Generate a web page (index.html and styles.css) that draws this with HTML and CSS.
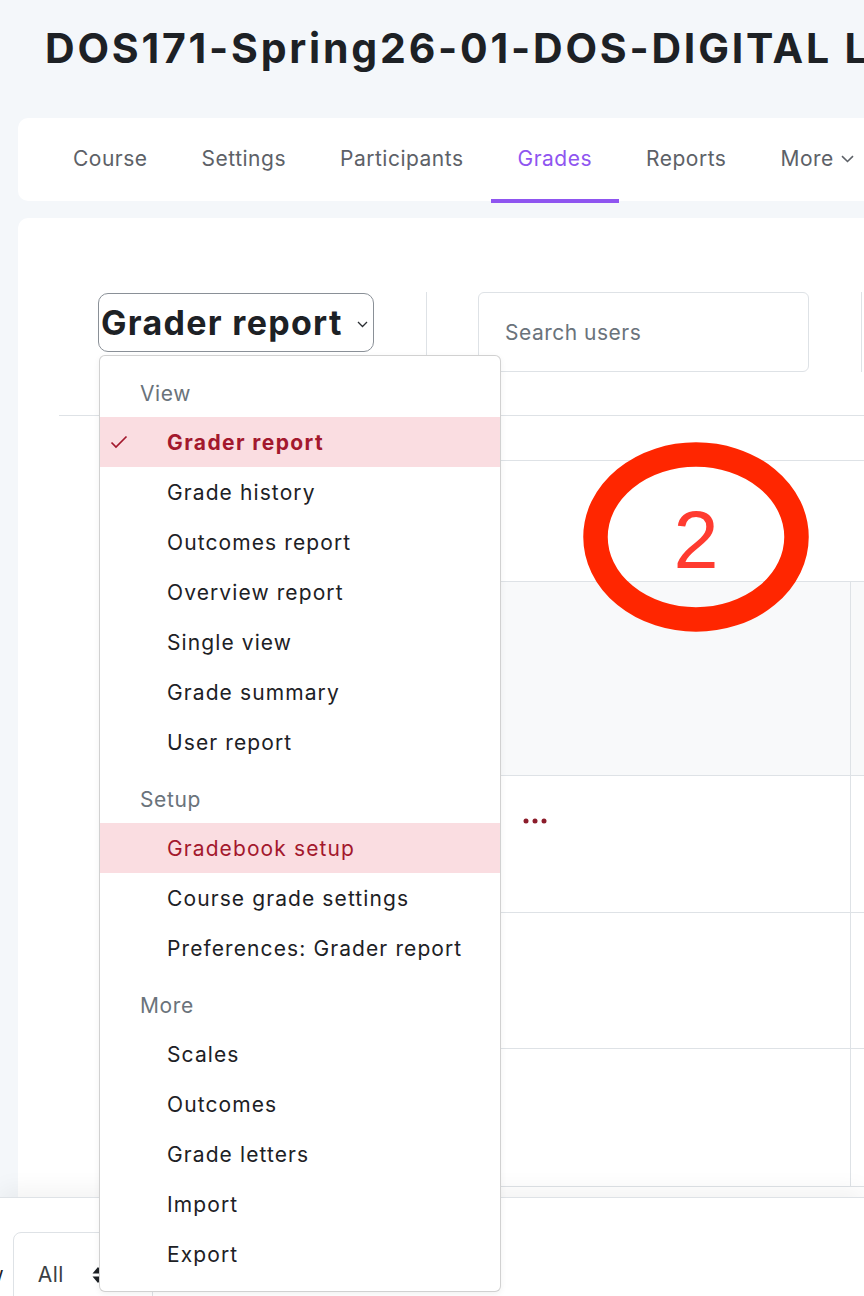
FILE: index.html
```html
<!DOCTYPE html>
<html lang="en">
<head>
  <meta charset="UTF-8">
  <meta name="viewport" content="width=device-width, initial-scale=1.0">
  <title>Grader report</title>
  <link rel="stylesheet" href="styles.css">
</head>
<body>
  <div class="page">

    <header class="page-header">
      <h1>DOS171-Spring26-01-DOS-DIGITAL LITERACY</h1>
    </header>

    <!-- course navigation -->
    <nav class="secondary-nav">
      <a class="nav-link" href="#">Course</a>
      <a class="nav-link" href="#">Settings</a>
      <a class="nav-link" href="#">Participants</a>
      <a class="nav-link active" href="#">Grades</a>
      <a class="nav-link" href="#">Reports</a>
      <a class="nav-link" href="#">More
        <svg class="nav-caret" width="13" height="8" viewBox="0 0 13 8"><path d="M1 1.2l5.5 5.3 5.5-5.3" fill="none" stroke="#5d6167" stroke-width="1.6"/></svg>
      </a>
    </nav>

    <main class="main-card">

      <!-- report selector + search -->
      <div class="tertiary-nav">
        <div class="report-select">
          <button class="select-btn">Grader report
            <svg class="select-caret" width="11" height="7" viewBox="0 0 11 7"><path d="M1 1l4.5 4.5L10 1" fill="none" stroke="#2b2f33" stroke-width="1.3"/></svg>
          </button>

          <div class="dropdown-menu">
            <div class="dropdown-header">View</div>
            <a class="dropdown-item selected" href="#">
              <svg class="check" width="18" height="14" viewBox="0 0 18 14"><path d="M1.5 7.5l4.5 4.5 10.5-10.5" fill="none" stroke="#a3182d" stroke-width="1.7"/></svg>
              Grader report
            </a>
            <a class="dropdown-item" href="#">Grade history</a>
            <a class="dropdown-item" href="#">Outcomes report</a>
            <a class="dropdown-item" href="#">Overview report</a>
            <a class="dropdown-item" href="#">Single view</a>
            <a class="dropdown-item" href="#">Grade summary</a>
            <a class="dropdown-item" href="#">User report</a>

            <div class="dropdown-header">Setup</div>
            <a class="dropdown-item hovered" href="#">Gradebook setup</a>
            <a class="dropdown-item" href="#">Course grade settings</a>
            <a class="dropdown-item" href="#">Preferences: Grader report</a>

            <div class="dropdown-header">More</div>
            <a class="dropdown-item" href="#">Scales</a>
            <a class="dropdown-item" href="#">Outcomes</a>
            <a class="dropdown-item" href="#">Grade letters</a>
            <a class="dropdown-item" href="#">Import</a>
            <a class="dropdown-item" href="#">Export</a>
          </div>
        </div>

        <span class="divider"></span>
        <div class="search-box">Search users</div>
        <span class="divider"></span>
      </div>

      <!-- grader table -->
      <div class="grader-table">
        <div class="cell-user"></div><div class="cell plain"></div><div class="cell plain"></div>
        <div class="cell-user"></div><div class="cell"></div><div class="cell"></div>
        <div class="cell-user"></div><div class="cell head"></div><div class="cell head split"></div>
        <div class="cell-user"></div>
        <div class="cell">
          <svg class="cell-menu" width="24" height="6" viewBox="0 0 24 6"><circle cx="3" cy="3" r="2.5" fill="#8c1c2b"/><circle cx="12" cy="3" r="2.5" fill="#8c1c2b"/><circle cx="21" cy="3" r="2.5" fill="#8c1c2b"/></svg>
        </div>
        <div class="cell split"></div>
        <div class="cell-user"></div><div class="cell"></div><div class="cell split"></div>
        <div class="cell-user"></div><div class="cell last"></div><div class="cell split last"></div>
      </div>

      <!-- step marker -->
      <svg class="step-mark" width="226" height="192" viewBox="0 0 226 192">
        <ellipse cx="113" cy="95" rx="100.5" ry="82.5" fill="none" stroke="#ff2600" stroke-width="24.5"/>
        <text x="113" y="126" text-anchor="middle" class="step-num">2</text>
      </svg>
    </main>

    <footer class="sticky-footer">
      <span class="footer-label">Show</span>
      <div class="per-page">
        All
        <svg class="updown" width="12" height="18" viewBox="0 0 12 18"><path d="M6 1L11.5 7.5H0.5z M6 17L11.5 10.5H0.5z" fill="#1d2125"/></svg>
      </div>
    </footer>

  </div>
</body>
</html>
```

FILE: styles.css
```css
* { box-sizing: border-box; }
body { margin: 0; font-family: "Inter", "Liberation Sans", sans-serif; background: #f4f7fa; color: #1d2125; }
a { text-decoration: none; color: inherit; }

.page { width: 864px; height: 1296px; overflow: hidden; display: flex; flex-direction: column; }

.page-header { height: 118px; padding: 24px 0 0 45px; flex-shrink: 0; }
.page-header h1 { margin: 0; font-size: 41px; line-height: 48px; font-weight: 700; white-space: nowrap; letter-spacing: 2.8px; }

/* course tabs */
.secondary-nav { display: flex; height: 83px; margin: 0 -60px 0 18px; padding-left: 28px; background: #fff; border-radius: 10px; flex-shrink: 0; }
.nav-link { position: relative; display: flex; align-items: center; padding: 0 27px 3px; font-size: 21px; letter-spacing: 0.5px; color: #5d6167; white-space: nowrap; }
.nav-link.active { color: #8f55f0; }
.nav-link.active::after { content: ""; position: absolute; left: 0; right: 0; bottom: -2px; height: 4px; background: #8f55f0; }
.nav-caret { margin-left: 7px; margin-top: 2px; }

/* report card */
.main-card { position: relative; height: 979px; margin: 17px -60px 0 18px; padding-left: 41px; background: #fff; border-radius: 10px 10px 0 0; flex-shrink: 0; }

.tertiary-nav { display: flex; align-items: flex-start; padding: 74px 0 43px 39px; border-bottom: 1px solid #dee2e6; }
.report-select { position: relative; margin-top: 1px; }
.select-btn { display: flex; align-items: center; width: 276px; height: 59px; padding: 0 0 0 2px; background: #fff; border: 1px solid #8a9097; border-radius: 10px; font-family: inherit; font-size: 34px; font-weight: 700; color: #1d2125; letter-spacing: 1.3px; white-space: nowrap; }
.select-caret { margin-left: auto; margin-right: 5px; margin-top: 4px; }
.divider { width: 1px; height: 80px; margin: 0 51px 0 52px; background: #dee2e6; }
.search-box { display: flex; align-items: center; width: 331px; height: 80px; padding-left: 26px; border: 1px solid #dee2e6; border-radius: 6px; font-size: 21px; letter-spacing: 0.5px; color: #6a737b; }

/* action menu */
.dropdown-menu { position: absolute; top: 62px; left: 1px; z-index: 20; width: 402px; height: 937px; padding: 13px 0; background: #fff; border: 1px solid rgba(0,0,0,0.18); border-radius: 6px; box-shadow: 0 2px 6px rgba(0,0,0,0.06); }
.dropdown-header { display: flex; align-items: center; height: 48px; padding-left: 40px; font-size: 21px; letter-spacing: 0.6px; color: #6a737b; }
.dropdown-item + .dropdown-header { margin-top: 8px; }
.dropdown-item { position: relative; display: flex; align-items: center; height: 50px; padding-left: 67px; font-size: 21px; letter-spacing: 1.1px; color: #1d2125; white-space: nowrap; }
.dropdown-item.selected { background: #fadde1; color: #a3182d; font-weight: 700; letter-spacing: 1.4px; }
.dropdown-item.hovered { background: #fadde1; color: #a3182d; }
.check { position: absolute; left: 10px; top: 18px; }

/* grid */
.grader-table { display: grid; grid-template-columns: 442px 349px 300px; grid-template-rows: 44px 121px 194px 137px 136px 139px; }
.cell { border-top: 1px solid #dee2e6; }
.cell.plain { border-top: 0; }
.cell.head { background: #f8f9fa; }
.cell.split { border-left: 1px solid #dee2e6; }
.cell.last { border-bottom: 1px solid #dee2e6; }
.cell-menu { margin: 42px 0 0 22px; }

.step-mark { position: absolute; left: 565px; top: 224px; z-index: 3; }
.step-num { font-family: "Liberation Sans", sans-serif; font-size: 81px; fill: #ff3b30; }

/* per-page footer */
.sticky-footer { position: relative; z-index: 5; display: flex; align-items: flex-start; height: 99px; padding-top: 34px; background: #fff; border-top: 1px solid #dee2e6; box-shadow: 0 -8px 22px rgba(0,0,0,0.05); flex-shrink: 0; }
.footer-label { margin: 30px 9px 0 -49px; font-size: 20px; line-height: 24px; color: #1d2125; }
.per-page { display: flex; align-items: flex-start; width: 140px; height: 90px; padding: 30px 0 0 24px; border: 1px solid #dee2e6; border-radius: 8px 8px 0 0; font-size: 21px; line-height: 24px; letter-spacing: 0.5px; color: #3a3f44; }
.updown { margin: 3px 0 0 28px; }
```
